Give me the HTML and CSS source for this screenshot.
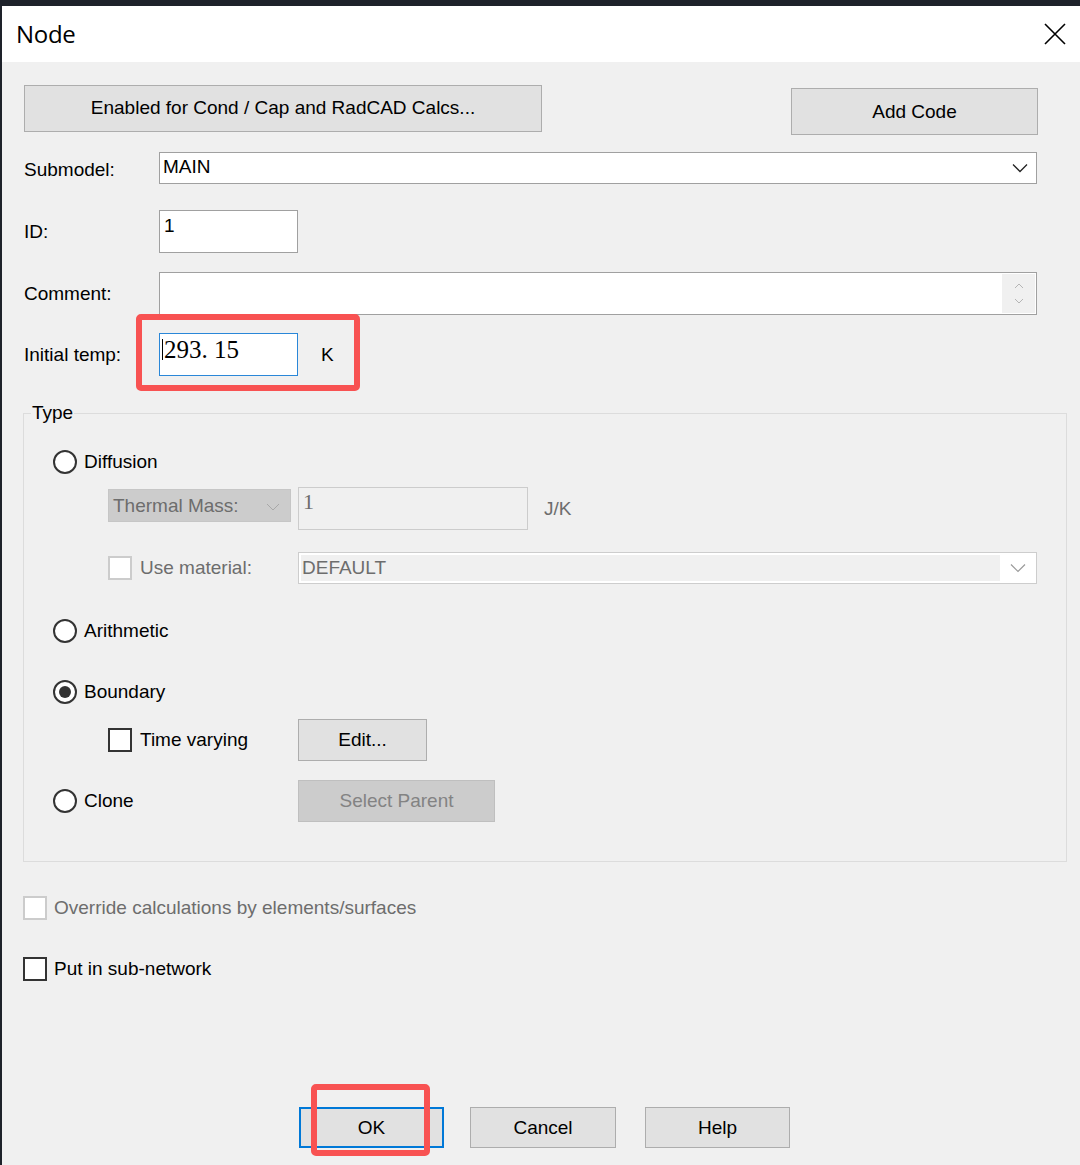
FILE: index.html
```html
<!DOCTYPE html>
<html lang="en">
<head>
    <meta charset="UTF-8">
    <meta name="viewport" content="width=device-width, initial-scale=1.0">
    <title>Node</title>
    <link rel="stylesheet" href="styles.css">
</head>
<body>
  <div class="window">

    <div class="titlebar">
      <span class="title">Node</span>
      <svg class="close" width="22" height="22" viewBox="0 0 22 22">
        <path d="M1 1 L21 21 M21 1 L1 21" stroke="#000" stroke-width="1.6" fill="none"/>
      </svg>
    </div>

    <div class="dialog">

      <div class="top-buttons">
        <button class="btn btn-calcs">Enabled for Cond / Cap and RadCAD Calcs...</button>
        <button class="btn btn-code">Add Code</button>
      </div>

      <div class="field-row row-submodel">
        <span class="field-label">Submodel:</span>
        <div class="combo">
          <span class="combo-text">MAIN</span>
          <svg class="chevron" width="16" height="10" viewBox="0 0 16 10">
            <polyline points="1,1.5 8,8.5 15,1.5" stroke="#222" stroke-width="1.3" fill="none"/>
          </svg>
        </div>
      </div>

      <div class="field-row row-id">
        <span class="field-label">ID:</span>
        <div class="textbox textbox-short">1</div>
      </div>

      <div class="field-row row-comment">
        <span class="field-label">Comment:</span>
        <div class="textbox textbox-long">
          <span class="textbox-fill"></span>
          <span class="spinner">
            <svg width="10" height="6" viewBox="0 0 10 6"><polyline points="1,5 5,1 9,5" stroke="#b5b5b5" stroke-width="1" fill="none"/></svg>
            <svg width="10" height="6" viewBox="0 0 10 6"><polyline points="1,1 5,5 9,1" stroke="#b5b5b5" stroke-width="1" fill="none"/></svg>
          </span>
        </div>
      </div>

      <div class="field-row row-temp">
        <span class="field-label">Initial temp:</span>
        <div class="temp-group">
          <div class="textbox textbox-short textbox-focus"><span class="caret"></span><span class="serif-value">293. 15</span></div>
          <span class="unit">K</span>
          <span class="highlight highlight-temp"></span>
        </div>
      </div>

      <fieldset class="type-group">
        <legend>Type</legend>

        <div class="option-row">
          <span class="radio"></span>
          <span class="option-label">Diffusion</span>
        </div>

        <div class="sub-row row-mass">
          <div class="mass-combo">
            <span>Thermal Mass:</span>
            <svg width="14" height="8" viewBox="0 0 14 8"><polyline points="1,1 7,7 13,1" stroke="#a8a8a8" stroke-width="1" fill="none"/></svg>
          </div>
          <div class="textbox textbox-mass"><span class="serif-value">1</span></div>
          <span class="unit unit-disabled">J/K</span>
        </div>

        <div class="sub-row row-material">
          <div class="sub-lead">
            <span class="checkbox checkbox-disabled"></span>
            <span class="option-label label-disabled">Use material:</span>
          </div>
          <div class="combo combo-disabled">
            <span class="combo-text">DEFAULT</span>
            <svg class="chevron" width="16" height="10" viewBox="0 0 16 10">
              <polyline points="1,1.5 8,8.5 15,1.5" stroke="#9a9a9a" stroke-width="1.2" fill="none"/>
            </svg>
          </div>
        </div>

        <div class="option-row row-arith">
          <span class="radio"></span>
          <span class="option-label">Arithmetic</span>
        </div>

        <div class="option-row row-boundary">
          <span class="radio radio-checked"></span>
          <span class="option-label">Boundary</span>
        </div>

        <div class="sub-row row-varying">
          <div class="sub-lead">
            <span class="checkbox"></span>
            <span class="option-label">Time varying</span>
          </div>
          <button class="btn btn-edit">Edit...</button>
        </div>

        <div class="option-row row-clone">
          <div class="clone-lead">
            <span class="radio"></span>
            <span class="option-label">Clone</span>
          </div>
          <button class="btn btn-parent">Select Parent</button>
        </div>
      </fieldset>

      <div class="check-row row-override">
        <span class="checkbox checkbox-disabled"></span>
        <span class="option-label label-disabled">Override calculations by elements/surfaces</span>
      </div>

      <div class="check-row row-subnet">
        <span class="checkbox"></span>
        <span class="option-label">Put in sub-network</span>
      </div>

      <div class="dialog-buttons">
        <div class="ok-wrap">
          <button class="btn btn-dialog btn-default">OK</button>
          <span class="highlight highlight-ok"></span>
        </div>
        <button class="btn btn-dialog btn-cancel">Cancel</button>
        <button class="btn btn-dialog btn-help">Help</button>
      </div>

    </div>
  </div>
</body>
</html>
```

FILE: styles.css
```css
body {
    margin: 0px;
    background-color: #1e222a;
    font-family: "Liberation Sans", Arial, sans-serif;
    font-size: 19px;
    color: #000000;
    height: 100vh;
    overflow: hidden;
}

.window {
    margin-top: 6px;
    margin-left: 2px;
    height: calc(100vh - 6px);
    background-color: #f0f0f0;
}

/* title bar */

.titlebar {
    height: 56px;
    background-color: #ffffff;
    display: flex;
    align-items: center;
    justify-content: space-between;
    padding: 0px 14px 0px 14px;
}

.title {
    font-family: "Open Sans", "Noto Sans", sans-serif;
    font-size: 24px;
    letter-spacing: -0.3px;
    margin-top: -1px;
}

.close {
    display: block;
    margin-top: -1px;
}

/* dialog body */

.dialog {
    padding: 23px 13px 0px 22px;
}

.btn {
    font-family: "Liberation Sans", Arial, sans-serif;
    font-size: 19px;
    color: #000000;
    background-color: #e1e1e1;
    border: 1px solid #adadad;
    box-sizing: border-box;
    padding: 0px;
    margin: 0px;
}

.top-buttons {
    display: flex;
    align-items: flex-start;
    justify-content: space-between;
    margin-right: 29px;
}

.btn-calcs {
    width: 518px;
    height: 47px;
    padding-bottom: 2px;
}

.btn-code {
    width: 247px;
    height: 47px;
    margin-top: 3px;
}

.field-row {
    display: flex;
    align-items: center;
}

.field-label {
    width: 135px;
    flex-shrink: 0;
    line-height: 22px;
}

.row-submodel {
    margin-top: 17px;
}

.row-submodel .field-label {
    padding-top: 4px;
}

.row-id {
    margin-top: 26px;
}

.row-comment {
    margin-top: 19px;
}

.row-temp {
    margin-top: 18px;
}

/* edit boxes and combos */

.textbox {
    height: 43px;
    box-sizing: border-box;
    background-color: #ffffff;
    border: 1px solid #a0a0a0;
    padding: 4px 4px 0px 4px;
    line-height: 22px;
}

.textbox-short {
    width: 139px;
}

.textbox-long {
    width: 878px;
    display: flex;
    padding: 0px;
}

.textbox-fill {
    flex: 1;
}

.spinner {
    width: 33px;
    background-color: #f0f0f0;
    display: flex;
    flex-direction: column;
    align-items: center;
    justify-content: center;
    gap: 9px;
    margin: 1px;
}

.spinner svg {
    display: block;
}

.textbox.textbox-focus {
    border: 1px solid #2a87d8;
    display: flex;
    align-items: flex-start;
    padding-left: 2px;
    padding-top: 5px;
}

.caret {
    width: 1px;
    height: 21px;
    background-color: #000000;
    margin-right: 1px;
}

.serif-value {
    font-family: "Liberation Serif", "Times New Roman", serif;
    font-size: 25px;
    line-height: 22px;
}

.temp-group {
    display: flex;
    align-items: center;
    position: relative;
}

.unit {
    margin-left: 23px;
    line-height: 22px;
}

.combo {
    width: 878px;
    height: 32px;
    box-sizing: border-box;
    background-color: #ffffff;
    border: 1px solid #a0a0a0;
    display: flex;
    align-items: flex-start;
    padding-left: 3px;
}

.combo-text {
    flex: 1;
    line-height: 22px;
    padding-top: 3px;
}

.combo .chevron {
    margin-top: 10px;
    margin-right: 8px;
}

/* red callouts drawn over the controls */

.highlight {
    position: absolute;
    border: 6px solid #f85252;
    border-radius: 5px;
    box-sizing: border-box;
    pointer-events: none;
}

.highlight-temp {
    left: -23px;
    top: -19px;
    width: 224px;
    height: 77px;
}

.highlight-ok {
    left: 12px;
    top: -23px;
    width: 119px;
    height: 72px;
}

/* type group */

.type-group {
    margin: 26px 0px 0px -1px;
    border: 1px solid #dcdcdc;
    padding: 26px 0px 39px 29px;
    min-inline-size: 0px;
}

.type-group legend {
    padding: 0px 1px;
    margin-left: -22px;
    line-height: 22px;
}

.option-row {
    display: flex;
    align-items: center;
    height: 24px;
}

.option-label {
    line-height: 22px;
}

.radio {
    width: 24px;
    height: 24px;
    box-sizing: border-box;
    border: 2px solid #333333;
    border-radius: 50%;
    background-color: #ffffff;
    margin-right: 7px;
    display: flex;
    align-items: center;
    justify-content: center;
    flex-shrink: 0;
}

.radio-checked::after {
    content: "";
    width: 12px;
    height: 12px;
    border-radius: 50%;
    background-color: #333333;
}

.checkbox {
    width: 24px;
    height: 24px;
    box-sizing: border-box;
    border: 2px solid #333333;
    background-color: #ffffff;
    margin-right: 8px;
    flex-shrink: 0;
}

.checkbox-disabled {
    border-color: #cccccc;
}

.label-disabled {
    color: #6d6d6d;
}

.sub-row {
    display: flex;
    align-items: center;
    padding-left: 55px;
}

.sub-lead {
    width: 190px;
    display: flex;
    align-items: center;
    flex-shrink: 0;
}

.row-mass {
    margin-top: 13px;
    align-items: flex-start;
}

.mass-combo {
    width: 183px;
    height: 33px;
    margin-top: 2px;
    box-sizing: border-box;
    background-color: #cccccc;
    border: 1px solid #c6c6c6;
    color: #6d6d6d;
    display: flex;
    align-items: center;
    justify-content: space-between;
    padding: 0px 10px 0px 4px;
    margin-right: 7px;
}

.mass-combo svg {
    display: block;
    margin-top: 2px;
}

.textbox-mass {
    width: 230px;
    background-color: #f0f0f0;
    border-color: #cccccc;
    color: #6d6d6d;
    padding-top: 3px;
}

.textbox-mass .serif-value {
    font-size: 22px;
}

.unit-disabled {
    color: #6d6d6d;
    margin-left: 16px;
    margin-top: 11px;
}

.row-material {
    margin-top: 22px;
}

.combo-disabled {
    width: 739px;
    border-color: #cdcdcd;
    padding: 2px 0px 2px 2px;
    color: #6d6d6d;
}

.combo-disabled .combo-text {
    background-color: #f0f0f0;
    align-self: stretch;
    padding-top: 0px;
    padding-left: 1px;
    line-height: 25px;
}

.combo-disabled .chevron {
    margin: 8px 10px 0px 10px;
}

.row-arith {
    margin-top: 35px;
}

.row-boundary {
    margin-top: 37px;
}

.row-varying {
    margin-top: 15px;
}

.btn-edit {
    width: 129px;
    height: 42px;
}

.row-clone {
    margin-top: 19px;
    height: 42px;
}

.clone-lead {
    width: 245px;
    display: flex;
    align-items: center;
}

.btn-parent {
    width: 197px;
    height: 42px;
    background-color: #cccccc;
    border-color: #bfbfbf;
    color: #838383;
}

/* bottom checkboxes */

.check-row {
    display: flex;
    align-items: center;
    height: 24px;
    margin-left: -1px;
}

.check-row .checkbox {
    margin-right: 7px;
}

.row-override {
    margin-top: 34px;
}

.row-subnet {
    margin-top: 37px;
}

/* OK / Cancel / Help */

.dialog-buttons {
    display: flex;
    margin-top: 126px;
    margin-left: 275px;
}

.ok-wrap {
    position: relative;
}

.btn-dialog {
    width: 145px;
    height: 41px;
}

.btn-default {
    border: 2px solid #0078d7;
}

.btn-cancel {
    margin-left: 26px;
    width: 146px;
}

.btn-help {
    margin-left: 29px;
}
```
